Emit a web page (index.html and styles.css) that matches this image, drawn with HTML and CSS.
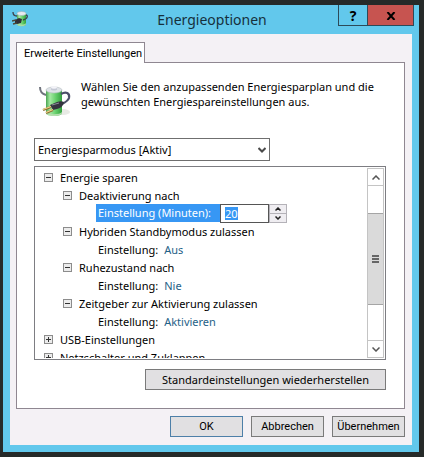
FILE: index.html
```html
<!DOCTYPE html>
<html lang="de">
<head>
    <meta charset="UTF-8">
    <meta name="viewport" content="width=device-width, initial-scale=1.0">
    <title>Energieoptionen</title>
    <link rel="stylesheet" href="styles.css">
</head>
<body>
    <svg class="defs" width="0" height="0" aria-hidden="true">
        <defs>
            <linearGradient id="cell" x1="0" x2="1" y1="0" y2="0">
                <stop offset="0" stop-color="#4aa552"/>
                <stop offset="0.25" stop-color="#a6eaa4"/>
                <stop offset="0.6" stop-color="#66d06c"/>
                <stop offset="1" stop-color="#33a03e"/>
            </linearGradient>
            <symbol id="battery" viewBox="0 0 32 32">
                <ellipse cx="24" cy="27" rx="7" ry="3" fill="#d9dcd4" opacity="0.6"/>
                <path d="M1 2c0 4 2 7 6 8" fill="none" stroke="#70747e" stroke-width="2"/>
                <path d="M7 5v23c0 4 16 4 16 0V5z" fill="url(#cell)"/>
                <path d="M7 27v1c0 4 16 4 16 0v-1c-2 3-14 3-16 0z" fill="#b4dfae"/>
                <ellipse cx="15" cy="5" rx="8" ry="3" fill="#dfe3e8" stroke="#b4bcc0" stroke-width="0.600"/>
                <path d="M12 2.500v2c0 1.300 6 1.300 6 0v-2z" fill="#c4c8d4"/>
                <ellipse cx="15" cy="2.500" rx="3" ry="1.200" fill="#f4f4f9"/>
                <path d="M22 9c5-3 9-1 8 4-1 3-3 4-7 6" fill="none" stroke="#4b4f68" stroke-width="2.200"/>
                <path d="M11 20l7-3c3-1 5-1 7 0-1 4-3 6-7 7l-4 1z" fill="#34343f"/>
                <path d="M13 20l7-2" stroke="#8e8e9c" stroke-width="1"/>
                <path d="M4 25l8-3M7 28l7-3" stroke="#8a6a30" stroke-width="2.200"/>
                <path d="M4 24.500l8-3M7 27.500l7-3" stroke="#f1d58a" stroke-width="1.300"/>
            </symbol>
        </defs>
    </svg>
    <main class="window">
        <header class="titlebar">
            <svg class="titlebar-icon" viewBox="0 0 16 16" aria-hidden="true">
                <path d="M5 2v11c0 3 9 3 9 0V2z" fill="url(#cell)"/>
                <path d="M5 12v1c0 3 9 3 9 0v-1c-1 2-8 2-9 0z" fill="#a9dda3"/>
                <ellipse cx="9.500" cy="2.500" rx="4.500" ry="2" fill="#e8ebf0" stroke="#9aa8b0" stroke-width="0.500"/>
                <path d="M1 1c0 3 1 4 4 4M14 4c2 0 2 4-3 5" fill="none" stroke="#3e424c" stroke-width="1.300"/>
                <path d="M3 9l4-2 3 1-1 4-4 1-2-1z" fill="#2e2e38"/>
                <path d="M0 10l4-1M1 13l4-1" stroke="#4d4636" stroke-width="1.500"/>
            </svg>
            <h1 class="title">Energieoptionen</h1>
            <div class="window-controls">
                <button type="button" class="help-button" aria-label="Hilfe">?</button>
                <button type="button" class="close-button" aria-label="Schließen">
                    <svg width="10" height="8" viewBox="0 0 10 8"><path d="M1.500 0l7 8M8.500 0l-7 8" fill="none" stroke="#000" stroke-width="2"/></svg>
                </button>
            </div>
        </header>
        <div class="client">
            <div class="tabs" role="tablist">
                <button type="button" class="tab" role="tab" aria-selected="true">Erweiterte Einstellungen</button>
            </div>
            <section class="panel" role="tabpanel">
                <div class="intro">
                    <svg class="intro-icon" aria-hidden="true"><use href="#battery"/></svg>
                    <p class="intro-text">Wählen Sie den anzupassenden Energiesparplan und die gewünschten Energiespareinstellungen aus.</p>
                </div>
                <div class="plan">
                    <select class="plan-select" aria-label="Energiesparplan">
                        <option>Energiesparmodus [Aktiv]</option>
                    </select>
                    <svg class="plan-arrow" viewBox="0 0 8 6" aria-hidden="true"><path d="M0.500 1l3.500 3.500L7.500 1" fill="none" stroke="#4a4a4a" stroke-width="2"/></svg>
                </div>
                <div class="tree-box">
                    <ul class="tree">
                        <li>
                            <div class="row"><button type="button" class="toggle" aria-label="Reduzieren"></button>Energie sparen</div>
                            <ul>
                                <li>
                                    <div class="row"><button type="button" class="toggle" aria-label="Reduzieren"></button>Deaktivierung nach</div>
                                    <div class="row setting">
                                        <label class="selected" for="minutes">Einstellung (Minuten):</label>
                                        <div class="spinner">
                                            <div class="spinner-field">
                                                <input id="minutes" class="minutes" type="text" value="20">
                                            </div>
                                            <div class="spinner-buttons">
                                                <button type="button" aria-label="Mehr"><svg width="6" height="4" viewBox="0 0 6 4"><path d="M0.500 3.500L3 1l2.500 2.500" fill="none" stroke="#222" stroke-width="1.500"/></svg></button>
                                                <button type="button" aria-label="Weniger"><svg width="6" height="4" viewBox="0 0 6 4"><path d="M0.500 0.500L3 3l2.500-2.500" fill="none" stroke="#222" stroke-width="1.500"/></svg></button>
                                            </div>
                                        </div>
                                    </div>
                                </li>
                                <li>
                                    <div class="row"><button type="button" class="toggle" aria-label="Reduzieren"></button>Hybriden Standbymodus zulassen</div>
                                    <div class="row setting"><span class="name">Einstellung:</span><a href="#" class="value">Aus</a></div>
                                </li>
                                <li>
                                    <div class="row"><button type="button" class="toggle" aria-label="Reduzieren"></button>Ruhezustand nach</div>
                                    <div class="row setting"><span class="name">Einstellung:</span><a href="#" class="value">Nie</a></div>
                                </li>
                                <li>
                                    <div class="row"><button type="button" class="toggle" aria-label="Reduzieren"></button>Zeitgeber zur Aktivierung zulassen</div>
                                    <div class="row setting"><span class="name">Einstellung:</span><a href="#" class="value">Aktivieren</a></div>
                                </li>
                            </ul>
                        </li>
                        <li>
                            <div class="row"><button type="button" class="toggle closed" aria-label="Erweitern"></button>USB-Einstellungen</div>
                        </li>
                        <li>
                            <div class="row"><button type="button" class="toggle closed" aria-label="Erweitern"></button>Netzschalter und Zuklappen</div>
                        </li>
                    </ul>
                    <div class="scrollbar">
                        <button type="button" class="scroll-button" aria-label="Nach oben"><svg width="8" height="5" viewBox="0 0 8 5"><path d="M0.500 4.500L4 1l3.500 3.500" fill="none" stroke="#555" stroke-width="1.500"/></svg></button>
                        <div class="track">
                            <div class="thumb"><span></span><span></span><span></span></div>
                        </div>
                        <button type="button" class="scroll-button" aria-label="Nach unten"><svg width="8" height="5" viewBox="0 0 8 5"><path d="M0.500 0.500L4 4l3.500-3.500" fill="none" stroke="#555" stroke-width="1.500"/></svg></button>
                    </div>
                </div>
                <button type="button" class="button restore">Standardeinstellungen wiederherstellen</button>
            </section>
            <footer class="actions">
                <button type="button" class="button default">OK</button>
                <button type="button" class="button">Abbrechen</button>
                <button type="button" class="button">Übernehmen</button>
            </footer>
        </div>
    </main>
</body>
</html>
```
FILE: styles.css
```css
* {
    box-sizing: border-box;
}

body {
    margin: 0;
    padding: 5px 5px 5px 3px;
    background-color: #262a29;
    color: #000;
    font-family: "Noto Sans", "Open Sans", sans-serif;
    font-size: 11px;
    line-height: 15px;
}

button,
select,
input {
    margin: 0;
    padding: 0;
    border-radius: 0;
    font: inherit;
    color: inherit;
}

ul {
    margin: 0;
    padding: 0;
    list-style: none;
}

.defs {
    position: absolute;
}

.window {
    padding: 0 7px 7px;
    background-color: #62c8ec;
}

.titlebar {
    display: grid;
    grid-template-columns: 1fr auto 1fr;
    height: 29px;
    margin-right: -2px;
}

.titlebar-icon {
    width: 16px;
    height: 16px;
    margin: 6px 2px;
}

.title {
    margin: 0;
    font-size: 14px;
    font-weight: normal;
    line-height: 29px;
    color: #16303c;
}

.window-controls {
    display: flex;
    justify-self: end;
    height: 21px;
}

.help-button,
.close-button {
    border: 1px solid #2c4a58;
    border-top: none;
}

.help-button {
    width: 29px;
    border-right: none;
    background-color: #62c8ec;
    font-size: 14px;
    font-weight: bold;
    color: #000;
}

.close-button {
    width: 47px;
    background-color: #c75450;
}

.client {
    padding: 8px 7px 8px 6px;
    background-color: #f4f1f5;
}

.tabs {
    display: flex;
}

.tab {
    height: 21px;
    padding: 0 2px 0 7px;
    margin-bottom: -1px;
    border: 1px solid #8f8791;
    border-bottom: none;
    background-color: #fff;
    z-index: 1;
}

.tab,
.actions .button {
    font-family: Roboto, sans-serif;
}

.panel {
    display: flex;
    flex-direction: column;
    padding: 16px 18px 18px 17px;
    border: 1px solid #8f8791;
    background-color: #fff;
}

.intro {
    display: flex;
    gap: 10px;
    padding: 0 0 21px 5px;
}

.intro-icon {
    flex: none;
    width: 32px;
    height: 32px;
    margin-top: 6px;
}

.intro-text {
    margin: 0;
}

.plan {
    position: relative;
    width: 67%;
    margin-bottom: 5px;
}

.plan-select {
    display: block;
    width: 100%;
    height: 23px;
    padding: 0 3px;
    border: 1px solid #6f6f6f;
    background-color: #fff;
    appearance: none;
}

.plan-arrow {
    position: absolute;
    top: 9px;
    right: 4px;
    width: 8px;
    height: 6px;
    pointer-events: none;
}

.tree-box {
    display: flex;
    height: 194px;
    padding: 1px;
    margin-bottom: 9px;
    border: 1px solid #7d7d82;
    overflow: hidden;
}

.tree {
    flex: 1;
    padding-left: 8px;
    overflow: hidden;
}

.tree ul {
    padding-left: 19px;
}

.row {
    display: flex;
    align-items: center;
    height: 18px;
    white-space: nowrap;
}

.toggle {
    flex: none;
    width: 9px;
    height: 9px;
    margin-right: 7px;
    border: 1px solid #8c8c8c;
    background: linear-gradient(#333, #333) center / 5px 1px no-repeat, #ececec;
}

.toggle.closed {
    background: linear-gradient(#333, #333) center / 5px 1px no-repeat, linear-gradient(#333, #333) center / 1px 5px no-repeat, #ececec;
}

.setting {
    padding-left: 33px;
}

.name {
    padding-left: 2px;
    margin-right: 6px;
}

.value {
    color: #1f6187;
    text-decoration: none;
}

.selected {
    height: 18px;
    padding: 0 9px 0 2px;
    line-height: 18px;
    background-color: #3797f4;
    color: #fff;
}

.spinner {
    display: flex;
    height: 19px;
}

.spinner-field {
    width: 49px;
    padding: 0 4px;
    border: 1px solid #555;
    background-color: #fff;
}

.minutes {
    display: block;
    width: 13px;
    height: 13px;
    margin-top: 2px;
    border: none;
    background-color: #3797f4;
    color: #fff;
}

.spinner-buttons {
    display: flex;
    flex-direction: column;
    width: 18px;
    padding: 1px;
    background-color: #b4b2b8;
    gap: 1px;
}

.spinner-buttons button {
    display: flex;
    flex: 1;
    align-items: center;
    justify-content: center;
    border: none;
    background-color: #efedf1;
}

.scrollbar {
    display: flex;
    flex-direction: column;
    width: 17px;
    border: 1px solid #c4c4c4;
}

.scroll-button {
    display: flex;
    align-items: center;
    justify-content: center;
    height: 16px;
    border: none;
    background-color: #fff;
}

.track {
    flex: 1;
    padding-top: 27px;
    border-top: 1px solid #c4c4c4;
    border-bottom: 1px solid #c4c4c4;
}

.thumb {
    display: flex;
    flex-direction: column;
    align-items: center;
    justify-content: center;
    gap: 1px;
    height: 92px;
    border: 1px solid #a5a5a5;
    border-width: 1px 0;
    background-color: #dadada;
}

.thumb span {
    width: 7px;
    height: 2px;
    background-color: #666;
}

.button {
    height: 21px;
    border: 1px solid #7a7a7a;
    background-color: #e1e0e2;
}

.restore {
    align-self: flex-end;
    width: 241px;
}

.actions {
    display: flex;
    justify-content: flex-end;
    gap: 8px;
    padding-top: 7px;
}

.actions .button {
    width: 73px;
}

.default {
    border-color: #4d7fa8;
}
```
